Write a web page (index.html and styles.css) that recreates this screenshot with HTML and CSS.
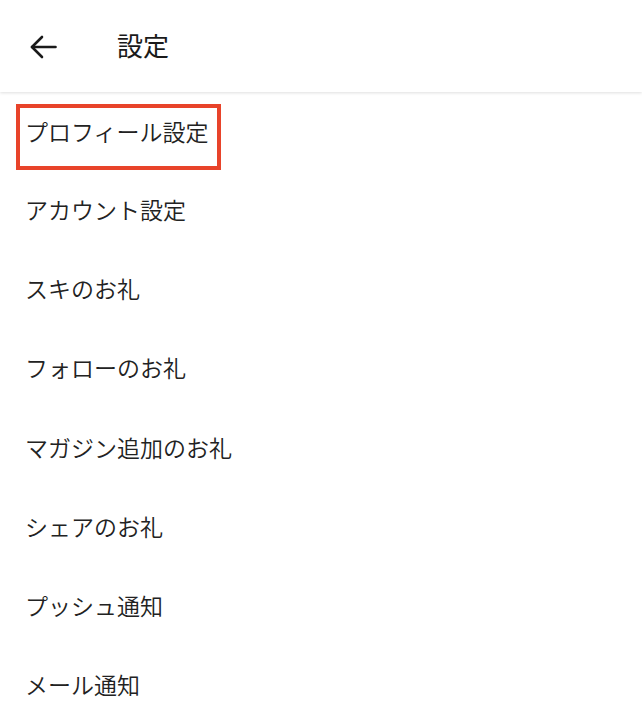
FILE: index.html
```html
<!DOCTYPE html>
<html lang="ja">
<head>
<meta charset="utf-8">
<title>設定</title>
<link rel="stylesheet" href="styles.css">
</head>
<body>
<header class="header">
  <button class="back" aria-label="戻る">
    <svg width="28" height="24" viewBox="0 0 28 24" fill="none" stroke="#1a1a1a" stroke-width="2.6" stroke-linecap="round" stroke-linejoin="round">
      <path d="M3 12H26.5"/>
      <path d="M13 2L3 12L13 22"/>
    </svg>
  </button>
  <h1 class="title">設定</h1>
</header>
<ul class="menu">
  <li class="item highlighted">プロフィール設定</li>
  <li class="item">アカウント設定</li>
  <li class="item">スキのお礼</li>
  <li class="item">フォローのお礼</li>
  <li class="item">マガジン追加のお礼</li>
  <li class="item">シェアのお礼</li>
  <li class="item">プッシュ通知</li>
  <li class="item">メール通知</li>
</ul>
</body>
</html>
```
FILE: styles.css
```css
*, *::before, *::after { box-sizing: border-box; }
html, body {
  margin: 0;
  padding: 0;
  background: #ffffff;
}
body {
  font-family: "Noto Sans CJK JP", "Noto Sans", sans-serif;
  color: #222222;
  width: 642px;
  height: 724px;
  overflow: hidden;
}
.header {
  height: 92px;
  display: flex;
  align-items: center;
  padding-left: 29px;
  background: #ffffff;
  box-shadow: 0 1px 3px rgba(0, 0, 0, 0.13);
  position: relative;
  z-index: 1;
}
.back {
  border: 0;
  background: none;
  padding: 0;
  margin: 0;
  width: 28px;
  height: 24px;
  display: flex;
  margin-top: 2px;
}
.title {
  margin: -2px 0 0 60px;
  font-size: 26px;
  font-weight: 400;
  line-height: 1;
  color: #1a1a1a;
}
.menu {
  list-style: none;
  margin: 0;
  padding: 0;
}
.item {
  height: 79.2px;
  display: flex;
  align-items: center;
  padding-left: 25px;
  font-size: 23px;
  font-weight: 350;
  line-height: 1;
  position: relative;
}
.item:first-child {
  height: 78px;
}
.highlighted::after {
  content: "";
  position: absolute;
  left: 16px;
  top: 12px;
  width: 205px;
  height: 66px;
  border: 4.5px solid #e8432a;
}
```
